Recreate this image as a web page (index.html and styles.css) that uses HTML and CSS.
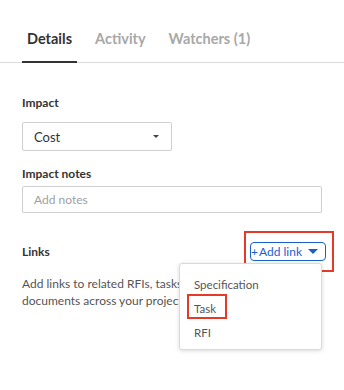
FILE: index.html
```html
<!DOCTYPE html>
<html>
<head>
<meta charset="utf-8">
<link rel="stylesheet" href="styles.css">
</head>
<body>
<div class="panel">
  <nav class="tabs">
    <span class="tab active">Details</span>
    <span class="tab">Activity</span>
    <span class="tab">Watchers (1)</span>
  </nav>
  <div class="content">
    <div class="field">
      <div class="label">Impact</div>
      <div class="select"><span>Cost</span><span class="caret"></span></div>
    </div>
    <div class="field notes">
      <div class="label">Impact notes</div>
      <div class="input">Add notes</div>
    </div>
    <div class="links">
      <div class="links-head">
        <div class="label">Links</div>
        <button class="add-link"><span class="plus">+</span><span>Add link</span><span class="caret blue"></span></button>
      </div>
      <p class="desc">Add links to related RFIs, tasks, sheets and<br>documents across your project.</p>
      <div class="highlight hl-button"></div>
      <ul class="menu">
        <li>Specification</li>
        <li>Task</li>
        <li>RFI</li>
      </ul>
      <div class="highlight hl-task"></div>
    </div>
  </div>
</div>
</body>
</html>
```

FILE: styles.css
```css
* { box-sizing: border-box; }
html, body { margin: 0; background: #fff; }
body {
  font-family: Lato, "Noto Sans", sans-serif;
  color: #333;
  width: 344px;
  height: 390px;
  overflow: hidden;
}
.tabs {
  display: flex;
  gap: 13px;
  padding: 29px 0 0 22px;
  border-bottom: 1px solid #dcdcdc;
}
.tab {
  font-size: 14.5px;
  font-weight: 700;
  line-height: 20px;
  padding: 0 5px 12px;
  color: #a8a8a8;
}
.tab.active {
  color: #333;
  border-bottom: 2px solid #333;
  margin-bottom: -1px;
}
.content { padding: 0 22px; }
.field { padding-top: 32px; }
.field.notes { padding-top: 15px; }
.label {
  font-size: 12px;
  font-weight: 700;
  line-height: 16px;
  color: #333;
}
.select {
  margin-top: 11px;
  width: 150px;
  height: 29px;
  border: 1px solid #d0d0d0;
  border-radius: 2px;
  display: flex;
  align-items: center;
  justify-content: space-between;
  padding: 0 12px 0 11px;
  font-size: 13px;
  color: #333;
}
.caret {
  width: 0; height: 0;
  border-left: 3px solid transparent;
  border-right: 3px solid transparent;
  border-top: 3px solid #444;
}
.caret.blue {
  flex: none;
  border-left-width: 5px;
  border-right-width: 5px;
  border-top: 5px solid #1a5fd0;
  margin-left: 6px;
}
.input {
  margin-top: 4px;
  height: 27px;
  border: 1px solid #d0d0d0;
  border-radius: 2px;
  padding: 0 11px;
  font-size: 12px;
  line-height: 25px;
  color: #a0a0a0;
}
.links { position: relative; padding-top: 29px; }
.links-head {
  display: flex;
  justify-content: space-between;
  align-items: center;
}
.add-link {
  margin-right: -4px;
  height: 19px;
  display: flex;
  align-items: center;
  white-space: nowrap;
  background: #fff;
  border: 1.5px solid #1a5fd0;
  border-radius: 4px;
  padding: 0 7px 0 0;
  font-family: inherit;
  font-size: 12px;
  color: #1a5fd0;
}
.plus { margin-right: 1px; }
.desc {
  margin: 14px 0 0;
  font-size: 12px;
  line-height: 17px;
  color: #555;
}
.highlight {
  position: absolute;
  border: 2.5px solid #e53a27;
}
.hl-button { left: 222px; top: 18px; width: 90px; height: 41px; }
.menu {
  position: absolute;
  left: 157px;
  top: 50px;
  width: 143px;
  height: 87px;
  margin: 0;
  padding: 9px 0 0;
  list-style: none;
  background: #fff;
  border: 1px solid #dadada;
  border-radius: 3px;
  box-shadow: 0 1px 4px rgba(0,0,0,0.15);
}
.menu li {
  height: 24px;
  line-height: 24px;
  padding-left: 14px;
  font-size: 11.5px;
  color: #555;
}
.hl-task { left: 165px; top: 81px; width: 40px; height: 25px; }
```
